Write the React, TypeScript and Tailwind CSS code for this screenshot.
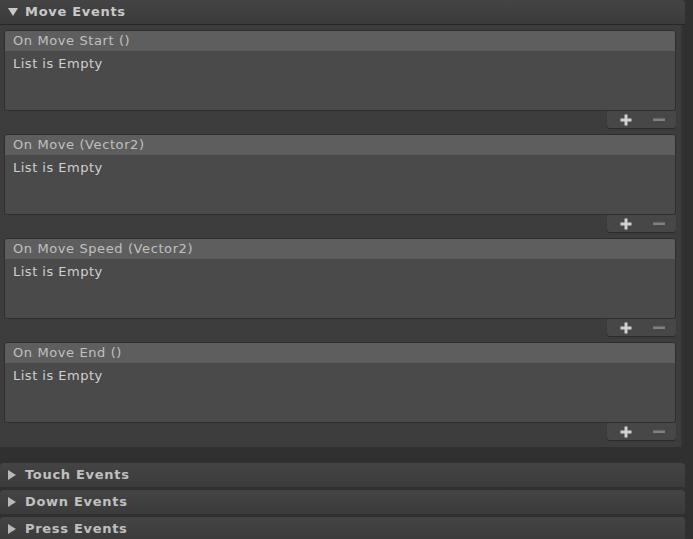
import React from "react";

const events = ["On Move Start ()", "On Move (Vector2)", "On Move Speed (Vector2)", "On Move End ()"];
const collapsed = ["Touch Events", "Down Events", "Press Events"];

function EventList({ title }: { title: string }) {
  return (
    <div className="flex flex-col">
      <div className="h-[81px] flex flex-col rounded-[3px] border border-[#2e2e2e] bg-[#4a4a4a] overflow-hidden">
        <div className="h-[20px] shrink-0 bg-[#5e5e5e] pl-[8px] text-[13px] tracking-[0.6px] leading-[20px] text-[#c0c0c0]">{title}</div>
        <div className="pl-[8px] pt-[4px] text-[13px] tracking-[0.5px] leading-[18px] text-[#cfcfcf]">List is Empty</div>
      </div>
      <div className="flex justify-end">
        <div className="w-[69px] h-[17px] flex items-center rounded-b-[3px] bg-[#474747] shadow-[0_1px_1px_#2a2a2a]">
          <svg width="12" height="12" viewBox="0 0 12 12" className="ml-[13px]">
            <rect x="0.5" y="4.5" width="11" height="3" fill="#d0d0d0" />
            <rect x="4.5" y="0.5" width="3" height="11" fill="#d0d0d0" />
          </svg>
          <svg width="12" height="4" viewBox="0 0 12 4" className="ml-[21px]">
            <rect x="0" y="0.5" width="12" height="2.5" fill="#808080" />
          </svg>
        </div>
      </div>
    </div>
  );
}

export default function App() {
  return (
    <div className="w-[693px] h-[539px] bg-[#303030] overflow-hidden flex flex-col" style={{ fontFamily: '"DejaVu Sans", Verdana, sans-serif' }}>
      <div className="w-[685px] h-[25px] shrink-0 flex items-center pl-[8px] rounded-tr-[4px] bg-gradient-to-b from-[#444444] to-[#3b3b3b] border-b border-[#262626]">
        <svg width="10" height="8" viewBox="0 0 10 8">
          <polygon points="0,0 10,0 5,8" fill="#c8c8c8" />
        </svg>
        <span className="ml-[7px] text-[13px] font-bold tracking-[0.7px] text-[#c8c8c8]">Move Events</span>
      </div>
      <div className="w-[683px] h-[422px] shrink-0 bg-[#3d3d3d] border-r-2 border-[#333333] pl-[4px] pr-[5px] pt-[5px] flex flex-col gap-[6px]">
        {events.map((e) => (
          <EventList key={e} title={e} />
        ))}
      </div>
      <div className="mt-[16px] flex flex-col gap-[3px]">
        {collapsed.map((c) => (
          <div key={c} className="w-[685px] h-[24px] flex items-center pl-[8px] rounded-t-[4px] bg-gradient-to-b from-[#444444] to-[#3b3b3b]">
            <svg width="8" height="10" viewBox="0 0 8 10">
              <polygon points="0,0 8,5 0,10" fill="#b8b8b8" />
            </svg>
            <span className="ml-[9px] text-[13px] font-bold tracking-[0.7px] text-[#c0c0c0]">{c}</span>
          </div>
        ))}
      </div>
    </div>
  );
}
